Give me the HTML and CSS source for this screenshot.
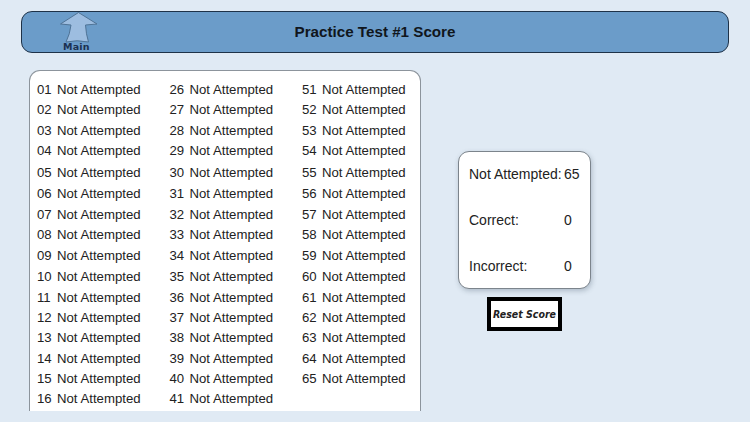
FILE: index.html
```html
<!DOCTYPE html>
<html lang="en">
<head>
<meta charset="utf-8">
<title>Practice Test #1 Score</title>
<link rel="stylesheet" href="styles.css">
</head>
<body>
<header class="topbar">
  <a class="main-link">
    <svg class="main-arrow" viewBox="0 0 38 32" width="38" height="32" aria-hidden="true">
      <path d="M18.5 0.5 L37 12 L25.5 13 Q26 22 28.5 30 Q17 27.5 6 30 Q10 22 11 13 L0.5 12 Z" fill="#9dbde0" stroke="#4f7396" stroke-width="1" stroke-linejoin="round"/>
    </svg>
    <span class="main-label">Main</span>
  </a>
  <h1 class="title">Practice Test #1 Score</h1>
</header>
<main class="content">
  <section class="list-panel">
    <div class="list-grid">
      <div class="row"><span class="num">01</span><span>Not Attempted</span></div>
      <div class="row"><span class="num">02</span><span>Not Attempted</span></div>
      <div class="row"><span class="num">03</span><span>Not Attempted</span></div>
      <div class="row"><span class="num">04</span><span>Not Attempted</span></div>
      <div class="row"><span class="num">05</span><span>Not Attempted</span></div>
      <div class="row"><span class="num">06</span><span>Not Attempted</span></div>
      <div class="row"><span class="num">07</span><span>Not Attempted</span></div>
      <div class="row"><span class="num">08</span><span>Not Attempted</span></div>
      <div class="row"><span class="num">09</span><span>Not Attempted</span></div>
      <div class="row"><span class="num">10</span><span>Not Attempted</span></div>
      <div class="row"><span class="num">11</span><span>Not Attempted</span></div>
      <div class="row"><span class="num">12</span><span>Not Attempted</span></div>
      <div class="row"><span class="num">13</span><span>Not Attempted</span></div>
      <div class="row"><span class="num">14</span><span>Not Attempted</span></div>
      <div class="row"><span class="num">15</span><span>Not Attempted</span></div>
      <div class="row"><span class="num">16</span><span>Not Attempted</span></div>
      <div class="row"><span class="num">26</span><span>Not Attempted</span></div>
      <div class="row"><span class="num">27</span><span>Not Attempted</span></div>
      <div class="row"><span class="num">28</span><span>Not Attempted</span></div>
      <div class="row"><span class="num">29</span><span>Not Attempted</span></div>
      <div class="row"><span class="num">30</span><span>Not Attempted</span></div>
      <div class="row"><span class="num">31</span><span>Not Attempted</span></div>
      <div class="row"><span class="num">32</span><span>Not Attempted</span></div>
      <div class="row"><span class="num">33</span><span>Not Attempted</span></div>
      <div class="row"><span class="num">34</span><span>Not Attempted</span></div>
      <div class="row"><span class="num">35</span><span>Not Attempted</span></div>
      <div class="row"><span class="num">36</span><span>Not Attempted</span></div>
      <div class="row"><span class="num">37</span><span>Not Attempted</span></div>
      <div class="row"><span class="num">38</span><span>Not Attempted</span></div>
      <div class="row"><span class="num">39</span><span>Not Attempted</span></div>
      <div class="row"><span class="num">40</span><span>Not Attempted</span></div>
      <div class="row"><span class="num">41</span><span>Not Attempted</span></div>
      <div class="row"><span class="num">51</span><span>Not Attempted</span></div>
      <div class="row"><span class="num">52</span><span>Not Attempted</span></div>
      <div class="row"><span class="num">53</span><span>Not Attempted</span></div>
      <div class="row"><span class="num">54</span><span>Not Attempted</span></div>
      <div class="row"><span class="num">55</span><span>Not Attempted</span></div>
      <div class="row"><span class="num">56</span><span>Not Attempted</span></div>
      <div class="row"><span class="num">57</span><span>Not Attempted</span></div>
      <div class="row"><span class="num">58</span><span>Not Attempted</span></div>
      <div class="row"><span class="num">59</span><span>Not Attempted</span></div>
      <div class="row"><span class="num">60</span><span>Not Attempted</span></div>
      <div class="row"><span class="num">61</span><span>Not Attempted</span></div>
      <div class="row"><span class="num">62</span><span>Not Attempted</span></div>
      <div class="row"><span class="num">63</span><span>Not Attempted</span></div>
      <div class="row"><span class="num">64</span><span>Not Attempted</span></div>
      <div class="row"><span class="num">65</span><span>Not Attempted</span></div>
    </div>
  </section>
  <aside class="side">
    <div class="summary">
      <div class="stat"><span>Not Attempted:</span><span class="value">65</span></div>
      <div class="stat"><span>Correct:</span><span class="value">0</span></div>
      <div class="stat"><span>Incorrect:</span><span class="value">0</span></div>
    </div>
    <button class="reset" type="button">Reset Score</button>
  </aside>
</main>
</body>
</html>
```
FILE: styles.css
```css
* { box-sizing: border-box; }
html, body { height: 100%; }
body {
  margin: 0;
  height: 422px;
  overflow: hidden;
  background: #e0eaf4;
  color: #1a1a1a;
  font-family: "Liberation Sans", Arial, sans-serif;
  padding: 11px 21px 0;
}
.topbar {
  display: flex;
  align-items: center;
  justify-content: center;
  position: relative;
  width: 708px;
  height: 42px;
  background: #6b9cc9;
  border: 1px solid #1e3248;
  border-radius: 11px;
}
.title {
  margin: 0 0 1px;
  font-size: 15.2px;
  font-weight: bold;
  color: #10161c;
}
.main-link {
  position: absolute;
  left: 38px;
  top: 0;
  width: 38px;
  height: 40px;
}
.main-arrow { display: block; }
.main-label {
  position: absolute;
  left: 3px;
  top: 29px;
  font-family: "DejaVu Sans", sans-serif;
  font-size: 9.5px;
  line-height: 12px;
  font-weight: bold;
  letter-spacing: 0.2px;
  color: #1b3050;
}
.content {
  display: flex;
  align-items: flex-start;
  margin: 17px 0 0 8px;
}
.list-panel {
  width: 392px;
  height: 341px;
  background: #fff;
  border: 1px solid #8c949c;
  border-bottom: 0;
  border-radius: 11px 11px 0 0;
  padding: 8px 0 0 7px;
  overflow: hidden;
}
.list-grid {
  display: grid;
  grid-auto-flow: column;
  grid-template-columns: 132.5px 132.5px 120px;
  grid-template-rows: 20.5px 20.5px 20px 21.5px 21.5px 21px 20.5px 20.5px 20px 22px 20px 20.5px 20.5px 20px 20.5px 20px;
  font-size: 13.2px;
  color: #222;
}
.row {
  display: flex;
  align-items: center;
  gap: 5px;
  white-space: nowrap;
}
.num { width: 15px; }
.side {
  display: flex;
  flex-direction: column;
  align-items: center;
  margin: 81px 0 0 37px;
}
.summary {
  width: 133px;
  height: 138px;
  display: flex;
  flex-direction: column;
  justify-content: space-between;
  padding: 14px 10px 14px;
  background: #fff;
  border: 1px solid #7c848c;
  border-radius: 11px;
  box-shadow: 1px 2px 5px rgba(60, 80, 100, 0.3);
  font-size: 14px;
  color: #222;
}
.stat {
  display: flex;
  justify-content: space-between;
  line-height: 16px;
}
.value {
  width: 16px;
  text-align: left;
}
.reset {
  width: 75px;
  height: 34px;
  margin-top: 8px;
  padding: 0;
  background: #fff;
  border: 4px solid #000;
  border-radius: 0;
  font-family: "DejaVu Sans", sans-serif;
  font-stretch: condensed;
  font-size: 10.5px;
  font-weight: bold;
  font-style: italic;
  color: #222;
  white-space: nowrap;
}
```
